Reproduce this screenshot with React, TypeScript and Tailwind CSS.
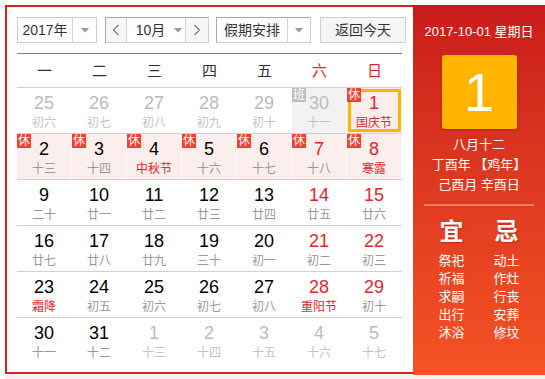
import React from 'react';

type Day = {
  d: number;
  l: string;
  other?: boolean;
  weekend?: boolean;
  festival?: boolean;
  rest?: boolean;
  work?: boolean;
  today?: boolean;
};

const weeks: Day[][] = [
  [
    { d: 25, l: '初六', other: true },
    { d: 26, l: '初七', other: true },
    { d: 27, l: '初八', other: true },
    { d: 28, l: '初九', other: true },
    { d: 29, l: '初十', other: true },
    { d: 30, l: '十一', other: true, work: true },
    { d: 1, l: '国庆节', weekend: true, festival: true, rest: true, today: true },
  ],
  [
    { d: 2, l: '十三', rest: true },
    { d: 3, l: '十四', rest: true },
    { d: 4, l: '中秋节', rest: true, festival: true },
    { d: 5, l: '十六', rest: true },
    { d: 6, l: '十七', rest: true },
    { d: 7, l: '十八', rest: true, weekend: true },
    { d: 8, l: '寒露', rest: true, weekend: true, festival: true },
  ],
  [
    { d: 9, l: '二十' },
    { d: 10, l: '廿一' },
    { d: 11, l: '廿二' },
    { d: 12, l: '廿三' },
    { d: 13, l: '廿四' },
    { d: 14, l: '廿五', weekend: true },
    { d: 15, l: '廿六', weekend: true },
  ],
  [
    { d: 16, l: '廿七' },
    { d: 17, l: '廿八' },
    { d: 18, l: '廿九' },
    { d: 19, l: '三十' },
    { d: 20, l: '初一' },
    { d: 21, l: '初二', weekend: true },
    { d: 22, l: '初三', weekend: true },
  ],
  [
    { d: 23, l: '霜降', festival: true },
    { d: 24, l: '初五' },
    { d: 25, l: '初六' },
    { d: 26, l: '初七' },
    { d: 27, l: '初八' },
    { d: 28, l: '重阳节', weekend: true, festival: true },
    { d: 29, l: '初十', weekend: true },
  ],
  [
    { d: 30, l: '十一' },
    { d: 31, l: '十二' },
    { d: 1, l: '十三', other: true },
    { d: 2, l: '十四', other: true },
    { d: 3, l: '十五', other: true },
    { d: 4, l: '十六', other: true },
    { d: 5, l: '十七', other: true },
  ],
];

const Caret = () => (
  <svg width="8" height="5" viewBox="0 0 8 5">
    <path d="M0 0 L8 0 L4 4.5 Z" fill="#999" />
  </svg>
);

const Chevron = ({ dir }: { dir: 'l' | 'r' }) => (
  <svg width="8" height="12" viewBox="0 0 8 12">
    <polyline
      points={dir === 'l' ? '6.5,1 1.5,6 6.5,11' : '1.5,1 6.5,6 1.5,11'}
      fill="none"
      stroke="#777"
      strokeWidth="1.1"
    />
  </svg>
);

const Cell = ({ day }: { day: Day }) => {
  let bg = 'bg-white';
  if (day.work) bg = 'bg-[#f2f2f2]';
  else if (day.rest) bg = 'bg-[#fdeeee]';

  let num = 'text-black';
  if (day.other) num = 'text-[#bbbbbb]';
  else if (day.weekend) num = 'text-[#e0262c]';

  let lunar = 'text-[#999999]';
  if (day.other) lunar = 'text-[#c4c4c4]';
  else if (day.festival) lunar = 'text-[#e0262c]';

  return (
    <div className={`relative h-[45px] border-r border-white text-center ${bg}`}>
      {day.today && (
        <div className="absolute top-px left-px right-0 bottom-px border-[3px] border-[#ffb400]" />
      )}
      {day.rest && (
        <span className="absolute top-0 left-0 z-10 flex h-[14px] w-[14px] items-center justify-center bg-[#f3402d] text-[12px] leading-none text-white">
          休
        </span>
      )}
      {day.work && (
        <span className="absolute top-0 left-0 z-10 flex h-[14px] w-[14px] items-center justify-center bg-[#bdbdbd] text-[12px] leading-none text-white">
          班
        </span>
      )}
      <div className={`pt-[5px] text-[18px] leading-[20px] ${num}`}>{day.d}</div>
      <div className={`mt-[2px] text-[12px] leading-[16px] ${lunar}`}>{day.l}</div>
    </div>
  );
};

export default function App() {
  const heads = ['一', '二', '三', '四', '五', '六', '日'];
  const yi = ['祭祀', '祈福', '求嗣', '出行', '沐浴'];
  const ji = ['动土', '作灶', '行丧', '安葬', '修坟'];

  return (
    <div className="font-['Liberation_Sans','Noto_Sans_CJK_SC',sans-serif] bg-white">
      <div className="ml-[5px] mt-[5px] flex">
        {/* calendar */}
        <div className="h-[369px] w-[408px] border-y-2 border-l-2 border-[#d3231e] pl-[10px] pr-[11px] pt-[10px]">
          <div className="flex h-[26px] w-[389px] text-[14px] text-[#333]">
            <div className="flex w-[80px] border border-[#cfcfcf]">
              <div className="flex w-[54px] items-center justify-center">2017年</div>
              <div className="flex flex-1 items-center justify-center border-l border-[#d5d5d5]">
                <Caret />
              </div>
            </div>
            <div className="ml-[8px] flex w-[104px] border border-[#a9a9a9] border-b-[#cfcfcf] border-r-[#cfcfcf]">
              <div className="flex w-[20px] items-center justify-center bg-[#f6f6f6]">
                <Chevron dir="l" />
              </div>
              <div className="flex w-[60px] items-center justify-center gap-[9px] border-x border-[#d5d5d5] pl-[6px]">
                <span>10月</span>
                <Caret />
              </div>
              <div className="flex flex-1 items-center justify-center bg-[#f6f6f6]">
                <Chevron dir="r" />
              </div>
            </div>
            <div className="ml-[7px] flex w-[95px] border border-[#a9a9a9] border-b-[#cfcfcf] border-r-[#cfcfcf]">
              <div className="flex w-[70px] items-center justify-center">假期安排</div>
              <div className="flex flex-1 items-center justify-center border-l border-[#d5d5d5]">
                <Caret />
              </div>
            </div>
            <div className="ml-[9px] flex w-[86px] items-center justify-center border border-[#d0d0d0] bg-[#f5f5f5]">
              返回今天
            </div>
          </div>

          <div className="mt-[10px] h-px bg-[#e5574b]" />

          <div className="grid h-[34px] grid-cols-7 border-b border-[#d0d0d0] text-[15px] leading-[33px] text-center text-[#333]">
            {heads.map((h, i) => (
              <div key={h} className={i > 4 ? 'text-[#e0262c]' : ''}>
                {h}
              </div>
            ))}
          </div>

          {weeks.map((w, i) => (
            <div
              key={i}
              className={`grid grid-cols-7 ${i < weeks.length - 1 ? 'border-b border-[#d0d0d0]' : ''}`}
            >
              {w.map((day, j) => (
                <Cell key={j} day={day} />
              ))}
            </div>
          ))}
        </div>

        {/* side panel */}
        <div className="flex h-[370px] w-[132px] flex-col items-center bg-gradient-to-b from-[#c91c1c] to-[#f55224] pt-[17px] text-white">
          <div className="text-[13px] leading-[20px]">2017-10-01 星期日</div>
          <div className="mt-[13px] flex h-[74px] w-[75px] items-center justify-center rounded-[3px] bg-[#ffb500] text-[54px] leading-none shadow-[0_1px_3px_rgba(120,0,0,0.35)]">
            1
          </div>
          <div className="mt-[6px] text-center text-[13px] leading-[20px]">
            <div>八月十二</div>
            <div>丁酉年 【鸡年】</div>
            <div>己酉月 辛酉日</div>
          </div>
          <div className="mt-[9px] h-[2px] w-[110px] bg-white/35" />
          <div className="mt-[11px] flex w-[110px] justify-around">
            <div className="flex flex-col items-center">
              <div className="text-[24px] font-bold leading-[30px] [text-shadow:1px_1px_2px_rgba(120,0,0,0.35)]">宜</div>
              <div className="mt-[5px] text-[13px] leading-[18px]">
                {yi.map((t) => (
                  <div key={t}>{t}</div>
                ))}
              </div>
            </div>
            <div className="flex flex-col items-center">
              <div className="text-[24px] font-bold leading-[30px] [text-shadow:1px_1px_2px_rgba(120,0,0,0.35)]">忌</div>
              <div className="mt-[5px] text-[13px] leading-[18px]">
                {ji.map((t) => (
                  <div key={t}>{t}</div>
                ))}
              </div>
            </div>
          </div>
        </div>
      </div>
      <div className="ml-[5px] h-[4px] bg-[#f3f3f3]" />
    </div>
  );
}
